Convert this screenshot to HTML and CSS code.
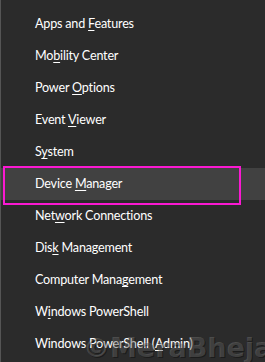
FILE: index.html
```html
<!DOCTYPE html>
<html lang="en">
<head>
<meta charset="UTF-8">
<title>Quick Link Menu</title>
<link rel="stylesheet" href="styles.css">
</head>
<body>

<!-- WIN+X MENU -->
<ul class="menu">
  <li class="item">Apps and <u>F</u>eatures</li>
  <li class="item">Mo<u>b</u>ility Center</li>
  <li class="item">Power <u>O</u>ptions</li>
  <li class="item">Event <u>V</u>iewer</li>
  <li class="item">S<u>y</u>stem</li>
  <li class="item active">Device <u>M</u>anager</li>
  <li class="item">Net<u>w</u>ork Connections</li>
  <li class="item">Dis<u>k</u> Management</li>
  <li class="item">Computer Mana<u>g</u>ement</li>
  <li class="item">W<u>i</u>ndows PowerShell</li>
  <li class="item">Windows PowerShell (<u>A</u>dmin)</li>
</ul>

<div class="watermark">&copy;MeraBheja.com</div>

</body>
</html>
```

FILE: styles.css
```css
/* -------- RESET -------- */
*{margin:0;padding:0;box-sizing:border-box}
html{overflow:hidden}

/* -------- BODY -------- */
body{
  background:#2b2b2b;
  color:#fff;
  font-family:Lato,'Noto Sans',sans-serif;
  font-size:12.6px;
  letter-spacing:-.2px;
  height:100vh;
  overflow:hidden;
  border-left:1px solid #555;
  position:relative;
}

/* -------- MENU -------- */
.menu{list-style:none;padding-top:8px}
.item{
  height:32px;line-height:32px;
  padding-left:34px;
  white-space:nowrap;
}
.item u{text-underline-offset:2px}

/* highlighted row + annotation box */
.item.active{background:#414141;position:relative}
.item.active::after{
  content:'';position:absolute;
  left:2px;top:-2px;width:234px;height:35px;
  border:2px solid #fa19d2;
}

/* -------- WATERMARK -------- */
.watermark{
  position:absolute;left:82px;top:332px;
  font-family:'DejaVu Sans',sans-serif;font-weight:700;font-size:27px;
  letter-spacing:0;
  color:rgba(255,255,255,.16);
  text-shadow:1px 1px 0 rgba(0,0,0,.35);
  white-space:nowrap;
  pointer-events:none;
}
```
